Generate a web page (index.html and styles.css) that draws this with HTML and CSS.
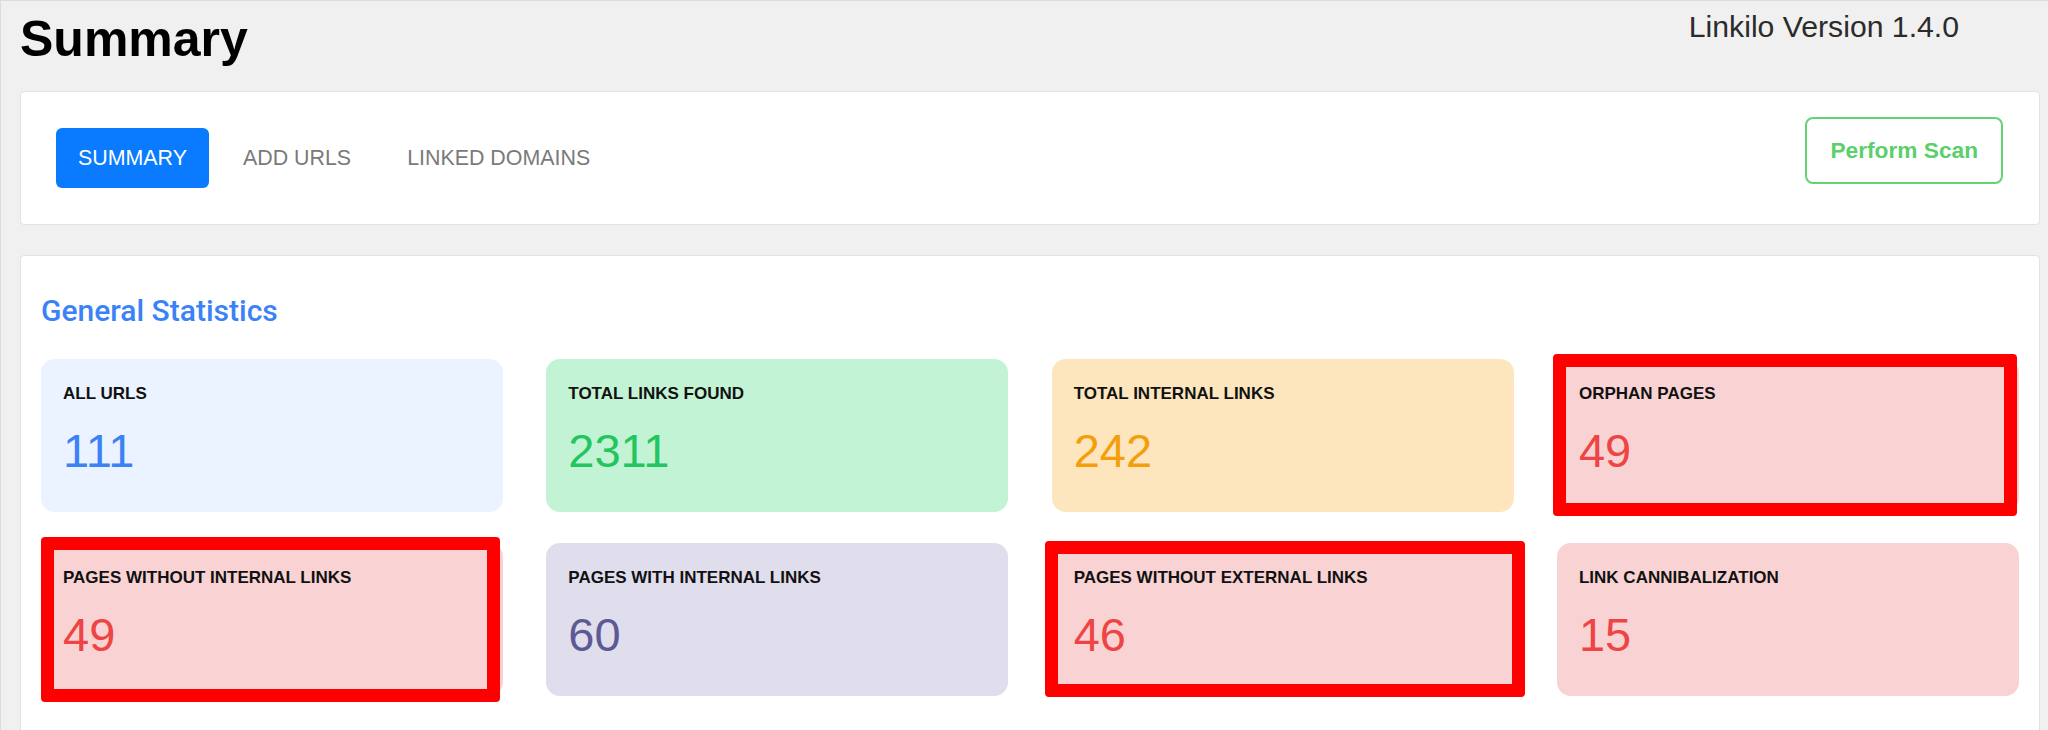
FILE: index.html
```html
<!DOCTYPE html>
<html lang="en">
<head>
<meta charset="utf-8">
<title>Summary - Linkilo</title>
<link rel="stylesheet" href="styles.css">
</head>
<body>
<div class="wrap">
  <header class="page-head">
    <h1 class="page-title">Summary</h1>
    <span class="version">Linkilo Version 1.4.0</span>
  </header>

  <section class="panel nav-panel">
    <nav class="tabs">
      <a class="tab tab-active">SUMMARY</a>
      <a class="tab">ADD URLS</a>
      <a class="tab">LINKED DOMAINS</a>
    </nav>
    <button class="scan-btn">Perform Scan</button>
  </section>

  <section class="panel stats-panel">
    <h2 class="stats-title">General Statistics</h2>
    <div class="stats-grid">
      <div class="stat stat-blue">
        <div class="stat-label">ALL URLS</div>
        <div class="stat-value">111</div>
      </div>
      <div class="stat stat-green">
        <div class="stat-label">TOTAL LINKS FOUND</div>
        <div class="stat-value">2311</div>
      </div>
      <div class="stat stat-orange">
        <div class="stat-label">TOTAL INTERNAL LINKS</div>
        <div class="stat-value">242</div>
      </div>
      <div class="stat stat-red">
        <div class="stat-label">ORPHAN PAGES</div>
        <div class="stat-value">49</div>
        <span class="mark mark-orphan"></span>
      </div>
      <div class="stat stat-red">
        <div class="stat-label">PAGES WITHOUT INTERNAL LINKS</div>
        <div class="stat-value">49</div>
        <span class="mark mark-no-internal"></span>
      </div>
      <div class="stat stat-purple">
        <div class="stat-label">PAGES WITH INTERNAL LINKS</div>
        <div class="stat-value">60</div>
      </div>
      <div class="stat stat-red">
        <div class="stat-label">PAGES WITHOUT EXTERNAL LINKS</div>
        <div class="stat-value">46</div>
        <span class="mark mark-no-external"></span>
      </div>
      <div class="stat stat-red">
        <div class="stat-label">LINK CANNIBALIZATION</div>
        <div class="stat-value">15</div>
      </div>
    </div>
  </section>
</div>
</body>
</html>
```

FILE: styles.css
```css
html {
  overflow: hidden;
}

body {
  margin: 0;
  background: #f0f0f0;
  border-top: 1px solid #dcdcdc;
  border-left: 1px solid #dcdcdc;
  font-family: "Liberation Sans", Arial, sans-serif;
  color: #111;
}

.wrap {
  padding: 0 8px 0 19px;
}

.page-head {
  display: flex;
  justify-content: space-between;
  align-items: flex-start;
  height: 90px;
  padding-right: 81px;
}

.page-title {
  margin: 13px 0 0 0;
  font-size: 50px;
  line-height: 50px;
  font-weight: 700;
  color: #000;
}

.version {
  margin-top: 11px;
  font-size: 30.2px;
  line-height: 30px;
  color: #2b2b2b;
}

.panel {
  background: #fff;
  border: 1px solid #e2e2e2;
  border-radius: 4px;
}

.nav-panel {
  display: flex;
  justify-content: space-between;
  align-items: flex-start;
  padding: 25px 36px 36px 35px;
}

.tabs {
  display: flex;
  gap: 12px;
  margin-top: 11px;
}

.tab {
  display: flex;
  align-items: center;
  height: 60px;
  padding: 0 22px;
  border-radius: 6px;
  font-size: 21.4px;
  color: #7a7a7a;
  text-decoration: none;
}

.tab-active {
  background: #0a7bff;
  color: #fff;
}

.scan-btn {
  height: 67px;
  padding: 0 23px;
  background: #fff;
  border: 2px solid #62d472;
  border-radius: 8px;
  font-family: "Liberation Sans", Arial, sans-serif;
  font-size: 22.7px;
  font-weight: 700;
  color: #5acf6a;
}

.stats-panel {
  margin-top: 30px;
  padding: 0 20px 60px 20px;
}

.stats-title {
  margin: 37px 0 30px 0;
  font-family: Roboto, "Liberation Sans", sans-serif;
  font-size: 30px;
  line-height: 36px;
  font-weight: 500;
  color: #3b82f6;
}

.stats-grid {
  display: grid;
  grid-template-columns: repeat(4, 1fr);
  column-gap: 43.3px;
  row-gap: 31px;
}

.stat {
  position: relative;
  height: 153px;
  box-sizing: border-box;
  padding: 25px 22px 0 22px;
  border-radius: 14px;
}

.stat-label {
  font-size: 17px;
  line-height: 20px;
  font-weight: 700;
  color: #111;
}

.stat-value {
  margin-top: 19px;
  font-size: 47px;
  line-height: 56px;
}

.stat-blue { background: #eaf3ff; }
.stat-blue .stat-value { color: #3b82f6; }

.stat-green { background: #c3f3d5; }
.stat-green .stat-value { color: #22c55e; }

.stat-orange { background: #fde6be; }
.stat-orange .stat-value { color: #f59e0b; }

.stat-red { background: #f9d3d4; }
.stat-red .stat-value { color: #ef4444; }

.stat-purple { background: #e0dded; }
.stat-purple .stat-value { color: #5c5a95; }

.mark {
  position: absolute;
  box-sizing: border-box;
  border: 13px solid #ff0000;
  border-radius: 4px;
}

.mark-orphan {
  left: -4px;
  top: -5px;
  width: 464px;
  height: 162px;
}

.mark-no-internal {
  left: 0;
  top: -6px;
  width: 459px;
  height: 165px;
}

.mark-no-external {
  left: -7px;
  top: -2px;
  width: 480px;
  height: 156px;
}
```
